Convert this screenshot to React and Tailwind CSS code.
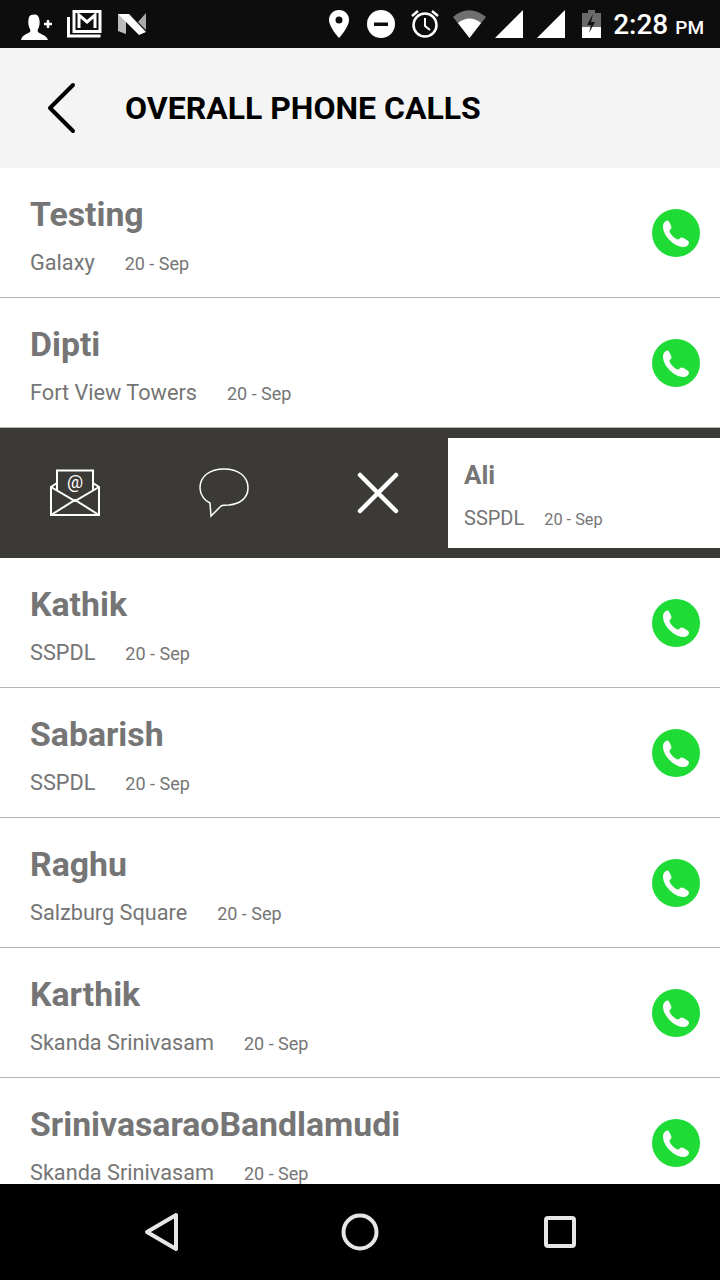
import React from "react";

const contacts = [
  { name: "Testing", place: "Galaxy" },
  { name: "Dipti", place: "Fort View Towers" },
  { name: "Ali", place: "SSPDL", swiped: true },
  { name: "Kathik", place: "SSPDL" },
  { name: "Sabarish", place: "SSPDL" },
  { name: "Raghu", place: "Salzburg Square" },
  { name: "Karthik", place: "Skanda Srinivasam" },
  { name: "SrinivasaraoBandlamudi", place: "Skanda Srinivasam" },
];

function StatusIcons() {
  return (
    <svg width="720" height="48" viewBox="0 0 720 48" className="absolute left-0 top-0">
      {/* add contact */}
      <path d="M21 40c1-5 6-6 9-8 1-1 0-3-1-5-1-3-1-7 0-10 2-3 7-3 9-1 2 3 2 7 1 11-1 2-2 4-1 5 2 2 7 3 9 6l1 2z" fill="#fff" />
      <path d="M44 24h8M48 20v8" stroke="#fff" strokeWidth="2.500" />
      {/* gmail */}
      <path d="M68.500 17v19h32" fill="none" stroke="#fff" strokeWidth="3" />
      <rect x="74" y="11.500" width="26" height="20" fill="none" stroke="#fff" strokeWidth="3" />
      <path d="M79 28v-13l8 7 8-7v13" fill="none" stroke="#fff" strokeWidth="3" />
      {/* nougat */}
      <path d="M118 14l8 1v19l-8-3z" fill="#bbb" />
      <path d="M138 22l8-9v17z" fill="#aaa" />
      <path d="M118 14h11l17 18-7 3z" fill="#fff" />
      {/* location */}
      <path d="M339 10c-6 0-10 4.500-10 10 0 7 10 18 10 18s10-11 10-18c0-5.500-4-10-10-10z" fill="#fff" />
      <circle cx="339" cy="20" r="3.500" fill="#0d0d0d" />
      {/* dnd */}
      <circle cx="381" cy="24" r="14" fill="#fff" />
      <rect x="374" y="22.500" width="14" height="3.500" fill="#0d0d0d" />
      {/* alarm */}
      <circle cx="425" cy="25" r="11.500" fill="none" stroke="#fff" strokeWidth="2.500" />
      <path d="M425 18v8l5 4" fill="none" stroke="#fff" strokeWidth="2" />
      <path d="M412 16l6-5M438 16l-6-5" stroke="#fff" strokeWidth="2.500" />
      {/* wifi */}
      <path d="M453 17c10-9 22-9 33 0l-16.500 21z" fill="#6f6f6f" />
      <path d="M458 23c7-6 16-6 23 0l-11.500 15z" fill="#fff" />
      {/* signal */}
      <path d="M495 38l28-28v28z" fill="#fff" />
      <path d="M537 38l28-28v28z" fill="#fff" />
      {/* battery */}
      <path d="M582 13h6v-3h7v3h6v25h-19z" fill="#6b6b6b" />
      <path d="M582 27h19v11h-19z" fill="#fff" />
      <path d="M593 14l-6 11h4l-2 8 6-11h-4z" fill="#111" />
    </svg>
  );
}

function PhoneButton() {
  return (
    <svg width="48" height="48" viewBox="0 0 48 48" className="shrink-0">
      <circle cx="24" cy="24" r="24" fill="#1edb36" />
      <path
        d="M16 11.500c-2.500 0-5 2.500-5 6 0 5 3 10 7 14 4 4 9 6.500 13 6.500 3.500 0 6-2 6-4.500 0-1.500-5.500-5-7.500-5-1.500 0-2 2-3.500 2-2.500 0-8.500-6-8.500-8.500 0-1.500 2-2 2-3.500 0-2-3-7-3.500-7z"
        fill="#fff"
      />
    </svg>
  );
}

function Row({ name, place }) {
  return (
    <div className="h-[130px] shrink-0 flex items-center justify-between pl-[30px] pr-[20px] border-b border-[#b5b5b5] bg-white">
      <div className="flex flex-col pt-[8px]">
        <span className="text-[33.800px] leading-[40px] font-bold text-[#757575]">{name}</span>
        <div className="flex items-baseline gap-[30px] mt-[13px] text-[#757575]">
          <span className="text-[21.700px] leading-[30px]">{place}</span>
          <span className="text-[18px] leading-[30px]">20 - Sep</span>
        </div>
      </div>
      <PhoneButton />
    </div>
  );
}

function SwipedRow({ name, place }) {
  return (
    <div className="h-[130px] shrink-0 flex items-center bg-[#3b3a36]">
      <div className="w-[448px] flex items-center pl-[50px]">
        <svg width="50" height="48" viewBox="0 0 50 48" className="shrink-0">
          <path d="M7 21V1.500h36V21" fill="none" stroke="#fff" strokeWidth="2" />
          <path d="M1 18v28h48V18l-6-4M7 14l-6 4 24 14 24-14M1 46l24-15 24 15" fill="none" stroke="#fff" strokeWidth="2" />
          <text x="25" y="19" textAnchor="middle" fontSize="18" fill="#fff" className="font-['Roboto',sans-serif]">@</text>
        </svg>
        <svg width="50" height="50" viewBox="0 0 50 50" className="shrink-0 ml-[99px]">
          <path d="M25 1C11 1 1 8 1 20c0 7 5 13 10 15l1 13 10-10c2-1 5-1 8-1 11-1 19-7 19-17C49 8 39 1 25 1z" fill="none" stroke="#fff" strokeWidth="1.500" />
        </svg>
        <svg width="42" height="42" viewBox="0 0 42 42" className="shrink-0 ml-[108px]">
          <path d="M3 3l36 36M39 3L3 39" stroke="#fff" strokeWidth="4.500" strokeLinecap="round" />
        </svg>
      </div>
      <div className="flex-1 h-[110px] bg-white flex flex-col pl-[16px] pt-[19px] text-[#757575]">
        <span className="text-[26px] leading-[36px] font-bold">{name}</span>
        <div className="flex items-baseline gap-[20px] mt-[11px]">
          <span className="text-[20px] leading-[28px]">{place}</span>
          <span className="text-[16.300px] leading-[28px]">20 - Sep</span>
        </div>
      </div>
    </div>
  );
}

export default function App() {
  return (
    <div className="relative w-[720px] h-[1280px] flex flex-col overflow-hidden bg-white font-['Roboto',sans-serif]">
      <div className="relative h-[48px] shrink-0 bg-[#0d0d0d] flex items-center justify-end pr-[16px] text-white">
        <StatusIcons />
        <span className="relative text-[28px] leading-none font-medium mt-[2px]">2:28</span>
        <span className="relative text-[19px] leading-none font-medium ml-[7px] mt-[7px]">PM</span>
      </div>

      <div className="h-[120px] shrink-0 bg-[#f4f4f4] flex items-center pl-[47px]">
        <svg width="30" height="52" viewBox="0 0 30 52" className="shrink-0">
          <path d="M26 3L3 26l23 23" fill="none" stroke="#000" strokeWidth="4" strokeLinecap="round" strokeLinejoin="round" />
        </svg>
        <span className="ml-[48px] text-[32px] font-bold text-black">OVERALL PHONE CALLS</span>
      </div>

      <div className="flex-1 min-h-0 overflow-hidden flex flex-col">
        {contacts.map((c) =>
          c.swiped ? <SwipedRow key={c.name} {...c} /> : <Row key={c.name} {...c} />
        )}
      </div>

      <div className="h-[96px] shrink-0 bg-black flex items-center justify-center gap-[160px]">
        <svg width="40" height="40" viewBox="0 0 40 40" className="shrink-0">
          <path d="M36 3L7 20l29 17z" fill="none" stroke="#e6e6e6" strokeWidth="4" strokeLinejoin="round" />
        </svg>
        <svg width="40" height="40" viewBox="0 0 40 40" className="shrink-0">
          <circle cx="20" cy="20" r="16.500" fill="none" stroke="#e6e6e6" strokeWidth="4" />
        </svg>
        <svg width="40" height="40" viewBox="0 0 40 40" className="shrink-0">
          <rect x="6" y="6" width="28" height="28" rx="2" fill="none" stroke="#e6e6e6" strokeWidth="4" />
        </svg>
      </div>
    </div>
  );
}
